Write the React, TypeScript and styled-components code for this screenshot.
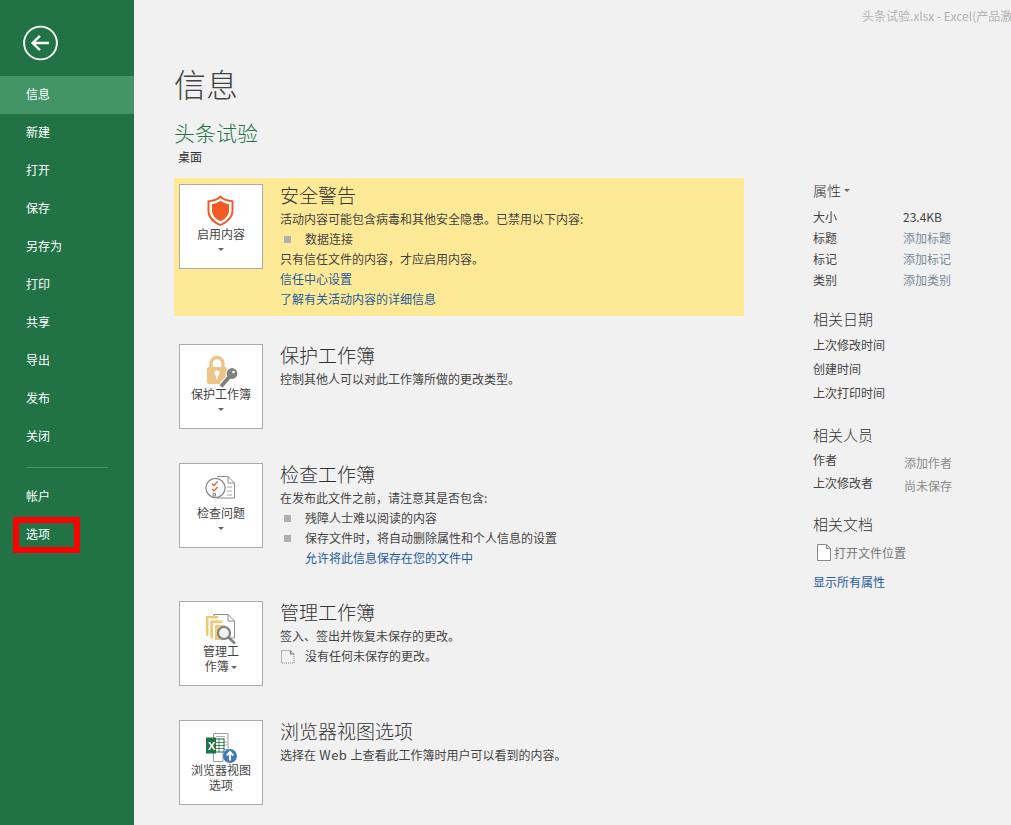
import React from "react";
import styled, { createGlobalStyle } from "styled-components";

const Global = createGlobalStyle`
  html, body { margin: 0; padding: 0; background: #f1f1f1; overflow: hidden; }
  body { font-family: "Noto Sans CJK SC", "Liberation Sans", sans-serif; }
  * { box-sizing: border-box; }
`;

const Page = styled.div`
  display: flex;
  width: 1011px;
  height: 825px;
  overflow: hidden;
  background: #f1f1f1;
  color: #444;
  font-size: 12px;
`;

const Sidebar = styled.nav`
  flex: 0 0 134px;
  background: #217346;
  color: #fff;
`;

const BackArea = styled.div`
  height: 76px;
  padding: 25px 0 0 23px;
  svg { display: block; }
`;

const NavItem = styled.div<{ $active?: boolean }>`
  position: relative;
  height: 38px;
  padding-left: 26px;
  line-height: 35px;
  font-size: 12px;
  background: ${(p) => (p.$active ? "#439467" : "transparent")};
`;

const NavDivider = styled.div`
  height: 1px;
  margin: 11px 26px 10px;
  width: 82px;
  background: #4b9069;
`;

const RedMark = styled.span`
  position: absolute;
  left: 13px;
  top: 1px;
  width: 67px;
  height: 36px;
  border: 6px solid #ff0000;
`;

const Main = styled.main`
  flex: 1;
  min-width: 0;
  padding-left: 40px;
`;

const WindowTitle = styled.div`
  height: 61px;
  padding: 8px 0 0 688px;
  line-height: 16px;
  font-size: 12px;
  color: #b4b4b4;
  white-space: nowrap;
  overflow: hidden;
`;

const PageTitle = styled.h1`
  margin: 0 0 12px;
  height: 44px;
  line-height: 44px;
  font-size: 32px;
  font-weight: 300;
  color: #444;
`;

const FileName = styled.div`
  height: 30px;
  line-height: 30px;
  font-size: 21px;
  font-weight: 300;
  color: #217346;
`;

const FilePath = styled.div`
  height: 18px;
  line-height: 20px;
  padding-left: 4px;
  margin-bottom: 13px;
  font-size: 12px;
  color: #333;
`;

const Columns = styled.div`
  display: flex;
  gap: 69px;
`;

const LeftColumn = styled.div`
  flex: 0 0 570px;
`;

const Section = styled.section<{ $warn?: boolean }>`
  display: flex;
  gap: 17px;
  padding: 6px 5px ${(p) => (p.$warn ? "0" : "28px")};
  height: ${(p) => (p.$warn ? "138px" : "auto")};
  margin-bottom: ${(p) => (p.$warn ? "22px" : "0")};
  background: ${(p) => (p.$warn ? "#fde996" : "transparent")};
`;

const ActionButton = styled.div`
  flex: 0 0 84px;
  height: 85px;
  padding-top: 7px;
  background: #fff;
  border: 1px solid #ababab;
  display: flex;
  flex-direction: column;
  align-items: center;
  svg { display: block; flex: none; overflow: visible; }
`;

const ActionLabel = styled.div`
  width: 80px;
  line-height: 15px;
  font-size: 12px;
  color: #444;
  text-align: center;
`;

const Caret = styled.span`
  display: inline-block;
  width: 0;
  height: 0;
  border-left: 3px solid transparent;
  border-right: 3px solid transparent;
  border-top: 3px solid #666;
  vertical-align: middle;
`;

const CaretRow = styled.div`
  height: 15px;
  line-height: 13px;
  text-align: center;
`;

const SectionBody = styled.div`
  flex: 1;
  min-width: 0;
  margin-bottom: -1px;
`;

const SectionTitle = styled.h2`
  margin: 0;
  height: 25px;
  line-height: 22px;
  font-size: 19px;
  font-weight: 300;
  color: #333;
`;

const Line = styled.div`
  height: 20px;
  line-height: 20px;
  font-size: 12px;
  color: #444;
  white-space: nowrap;
`;

const LinkLine = styled(Line)`
  color: #1f5c9e;
`;

const Bullet = styled(Line)`
  display: flex;
  align-items: center;
  gap: 14px;
  padding-left: 4px;
  &::before {
    content: "";
    flex: none;
    width: 7px;
    height: 7px;
    background: #b0b0b0;
  }
`;

const IndentLink = styled(LinkLine)`
  padding-left: 25px;
`;

const IconLine = styled(Line)`
  display: flex;
  align-items: center;
  gap: 9px;
  svg { flex: none; }
`;

const Latin = styled.span`
  font-size: 13px;
  letter-spacing: 0.4px;
`;

const RightColumn = styled.aside`
  flex: 0 0 198px;
`;

const PropHeading = styled.h3<{ $top?: number }>`
  margin: ${(p) => p.$top ?? 0}px 0 0;
  height: 26px;
  padding-bottom: 2px;
  font-size: 15px;
  font-weight: 300;
  color: #333;
  display: flex;
  align-items: center;
  gap: 3px;
`;

const SmallHeading = styled(PropHeading)`
  font-size: 14px;
  margin-bottom: 2px;
`;

const PropList = styled.div<{ $top?: number }>`
  margin-top: ${(p) => p.$top ?? 0}px;
`;

const PropRow = styled.div<{ $h: number }>`
  display: grid;
  grid-template-columns: 90px 1fr;
  height: ${(p) => p.$h}px;
  line-height: ${(p) => p.$h}px;
  font-size: 12px;
  color: #444;
`;

const PropValue = styled.span<{ $muted?: boolean; $nudge?: boolean }>`
  color: ${(p) => (p.$muted ? "#7a8a99" : "#444")};
  ${(p) => (p.$nudge ? "color:#8a8a8a; padding:3px 0 0 1px;" : "")}
`;

const FileLocation = styled.div`
  display: flex;
  align-items: center;
  gap: 3px;
  height: 26px;
  margin-top: 2px;
  padding-left: 4px;
  font-size: 12px;
  color: #777;
`;

const ShowAll = styled.div`
  margin-top: 7px;
  height: 20px;
  line-height: 20px;
  font-size: 12px;
  color: #1f5c9e;
`;

const BackIcon = () => (
  <svg width="36" height="36" viewBox="0 0 36 36" fill="none" stroke="#fff">
    <circle cx="17.5" cy="18" r="16.4" strokeWidth="1.9" />
    <path d="M26 18H10M17 10.8L9.6 18l7.4 7.2" strokeWidth="2.4" />
  </svg>
);

const ShieldIcon = () => (
  <svg width="40" height="34" viewBox="0 0 40 34">
    <path d="M19.5 3.500l3.500 2.600c2.500 1.400 5.500 2 9.500 2.400v10c0 7-5.500 12.500-13 15.500C12 31.500 6.500 26 6.500 18.500v-10c4-.4 7-1 9.500-2.400z" fill="#f25a26" />
    <path d="M19.500 6l2.500 1.800c2.200 1.200 4.700 1.900 8.500 2.300v8.400c0 5.900-4.500 10.500-11 13.400C13 29 8.500 24.400 8.500 18.500v-8.400c3.800-.4 6.300-1.100 8.500-2.300z" fill="#fff" />
    <path d="M19.500 8.800l1.500 1c2 1.200 4.300 1.900 7 2.300v6.400c0 4.600-3.300 8.300-8.500 10.700-5.200-2.400-8.500-6.100-8.500-10.700v-6.400c2.700-.4 5-1.100 7-2.300z" fill="#f25a26" />
  </svg>
);

const LockIcon = () => (
  <svg width="40" height="34" viewBox="0 0 40 34">
    <path d="M10 16V11.500a6 6 0 0 1 12 0V16" fill="none" stroke="#ecc586" strokeWidth="3.400" />
    <rect x="6" y="15" width="20" height="17" rx="2" fill="#ecc586" />
    <circle cx="16" cy="21" r="2.600" fill="#fff" />
    <rect x="15" y="21" width="2" height="6" fill="#fff" />
    <path d="M20 34.500L30 23" stroke="#fff" strokeWidth="6" />
    <circle cx="31" cy="21.500" r="6.400" fill="#fff" />
    <path d="M20 34.500L30 23" stroke="#7f7f7f" strokeWidth="3.800" />
    <circle cx="31" cy="21.500" r="5.400" fill="#7f7f7f" />
    <circle cx="32.500" cy="20" r="1.300" fill="#fff" />
  </svg>
);

const InspectIcon = () => (
  <svg width="40" height="34" viewBox="0 0 40 34" fill="none">
    <path d="M16 5.500h11l6.500 6.500v15H16" stroke="#8c8c8c" fill="#fff" />
    <path d="M27 5.500V12h6.500" stroke="#8c8c8c" />
    <path d="M26 16h5M26 20h5M26 24h5" stroke="#a6a6a6" />
    <circle cx="14.500" cy="17" r="9.600" stroke="#8c8c8c" strokeWidth="1.300" fill="#fff" />
    <path d="M11 12.500l2 2 3.500-4M11 18l2 2 3.500-4" stroke="#e4603c" strokeWidth="1.300" />
    <rect x="12" y="22.500" width="2.500" height="2.500" stroke="#8c8c8c" />
  </svg>
);

const ManageIcon = () => (
  <svg width="40" height="34" viewBox="0 0 40 34" fill="none">
    <path d="M13 5.500h14l6.500 6.500v17H13z" stroke="#8c8c8c" fill="#fff" />
    <path d="M27 5.500V12h6.500" stroke="#8c8c8c" />
    <rect x="5" y="7" width="12" height="20" fill="#f0c978" />
    <rect x="7.500" y="9.500" width="11" height="2" fill="#fff" />
    <rect x="7.500" y="9.500" width="2" height="17.500" fill="#fff" />
    <rect x="9.500" y="11.500" width="12" height="18" fill="#f0c978" />
    <rect x="12" y="14" width="12" height="2" fill="#fff" />
    <rect x="12" y="14" width="2" height="15.500" fill="#fff" />
    <rect x="14" y="16" width="10" height="15" fill="#f0c978" />
    <circle cx="23" cy="24" r="6" stroke="#7f7f7f" strokeWidth="2.200" fill="#f1f1f1" />
    <path d="M27.500 28.500L34 34.500" stroke="#7f7f7f" strokeWidth="2.600" />
  </svg>
);

const BrowserIcon = () => (
  <svg width="40" height="34" viewBox="0 0 40 34" fill="none">
    <path d="M12.500 5.500h14.500v16h-5v12h-9.500z" stroke="#9a9a9a" fill="#fff" />
    <path d="M15 8.500h9M15 11h9M23 14h3M23 17h3" stroke="#b0b0b0" />
    <rect x="14" y="11" width="9" height="13" fill="#fff" stroke="#217346" />
    <path d="M14 14.500h9M14 17.500h9M14 20.500h9M18 11v13" stroke="#217346" strokeWidth=".8" />
    <rect x="5" y="9.500" width="10" height="16" fill="#217346" />
    <text x="7" y="21.500" fontFamily="Liberation Sans, sans-serif" fontWeight="700" fontSize="11" fill="#fff">X</text>
    <circle cx="29" cy="28" r="7" fill="#3f7cb6" />
    <path d="M29 32.500v-8M25.800 27.500L29 24l3.200 3.500" stroke="#fff" strokeWidth="2" />
  </svg>
);

const DraftIcon = () => (
  <svg width="16" height="15" viewBox="0 0 16 15" fill="none" stroke="#777">
    <path d="M1.500 1.500h9l3.500 3.500v9H1.500z" strokeDasharray="1 1" />
    <path d="M10.500 1.500V5H14" />
  </svg>
);

const DocIcon = () => (
  <svg width="14" height="17" viewBox="0 0 14 17" fill="none">
    <path d="M.5.500h9l4 4v12H.5z" fill="#fff" stroke="#8a8a8a" />
    <path d="M9.500.500v4h4" stroke="#8a8a8a" />
  </svg>
);

const navTop = ["信息", "新建", "打开", "保存", "另存为", "打印", "共享", "导出", "发布", "关闭"];

export default function App() {
  return (
    <Page>
      <Global />
      <Sidebar>
        <BackArea>
          <BackIcon />
        </BackArea>
        {navTop.map((item, i) => (
          <NavItem key={item} $active={i === 0}>
            {item}
          </NavItem>
        ))}
        <NavDivider />
        <NavItem>帐户</NavItem>
        <NavItem>
          选项
          <RedMark />
        </NavItem>
      </Sidebar>
      <Main>
        <WindowTitle>头条试验.xlsx - Excel(产品激活失败)</WindowTitle>
        <PageTitle>信息</PageTitle>
        <FileName>头条试验</FileName>
        <FilePath>桌面</FilePath>
        <Columns>
          <LeftColumn>
            <Section $warn>
              <ActionButton>
                <ShieldIcon />
                <ActionLabel>启用内容</ActionLabel>
                <CaretRow>
                  <Caret />
                </CaretRow>
              </ActionButton>
              <SectionBody>
                <SectionTitle>安全警告</SectionTitle>
                <Line>活动内容可能包含病毒和其他安全隐患。已禁用以下内容:</Line>
                <Bullet>数据连接</Bullet>
                <Line>只有信任文件的内容，才应启用内容。</Line>
                <LinkLine>信任中心设置</LinkLine>
                <LinkLine>了解有关活动内容的详细信息</LinkLine>
              </SectionBody>
            </Section>
            <Section>
              <ActionButton>
                <LockIcon />
                <ActionLabel>保护工作簿</ActionLabel>
                <CaretRow>
                  <Caret />
                </CaretRow>
              </ActionButton>
              <SectionBody>
                <SectionTitle>保护工作簿</SectionTitle>
                <Line>控制其他人可以对此工作簿所做的更改类型。</Line>
              </SectionBody>
            </Section>
            <Section>
              <ActionButton>
                <InspectIcon />
                <ActionLabel>检查问题</ActionLabel>
                <CaretRow>
                  <Caret />
                </CaretRow>
              </ActionButton>
              <SectionBody>
                <SectionTitle>检查工作簿</SectionTitle>
                <Line>在发布此文件之前，请注意其是否包含:</Line>
                <Bullet>残障人士难以阅读的内容</Bullet>
                <Bullet>保存文件时，将自动删除属性和个人信息的设置</Bullet>
                <IndentLink>允许将此信息保存在您的文件中</IndentLink>
              </SectionBody>
            </Section>
            <Section>
              <ActionButton>
                <ManageIcon />
                <ActionLabel>
                  管理工
                  <br />
                  作簿 <Caret />
                </ActionLabel>
              </ActionButton>
              <SectionBody>
                <SectionTitle>管理工作簿</SectionTitle>
                <Line>签入、签出并恢复未保存的更改。</Line>
                <IconLine>
                  <DraftIcon />
                  没有任何未保存的更改。
                </IconLine>
              </SectionBody>
            </Section>
            <Section>
              <ActionButton>
                <BrowserIcon />
                <ActionLabel>
                  浏览器视图
                  <br />
                  选项
                </ActionLabel>
              </ActionButton>
              <SectionBody>
                <SectionTitle>浏览器视图选项</SectionTitle>
                <Line>
                  选择在<Latin> Web </Latin>上查看此工作簿时用户可以看到的内容。
                </Line>
              </SectionBody>
            </Section>
          </LeftColumn>
          <RightColumn>
            <SmallHeading>
              属性 <Caret />
            </SmallHeading>
            <PropRow $h={21}>
              <span>大小</span>
              <PropValue>23.4KB</PropValue>
            </PropRow>
            <PropRow $h={21}>
              <span>标题</span>
              <PropValue $muted>添加标题</PropValue>
            </PropRow>
            <PropRow $h={21}>
              <span>标记</span>
              <PropValue $muted>添加标记</PropValue>
            </PropRow>
            <PropRow $h={21}>
              <span>类别</span>
              <PropValue $muted>添加类别</PropValue>
            </PropRow>
            <PropHeading $top={16}>相关日期</PropHeading>
            <PropList $top={1}>
              <PropRow $h={24}>
                <span>上次修改时间</span>
              </PropRow>
              <PropRow $h={24}>
                <span>创建时间</span>
              </PropRow>
              <PropRow $h={24}>
                <span>上次打印时间</span>
              </PropRow>
            </PropList>
            <PropHeading $top={17}>相关人员</PropHeading>
            <PropList>
              <PropRow $h={23}>
                <span>作者</span>
                <PropValue $nudge>添加作者</PropValue>
              </PropRow>
              <PropRow $h={23}>
                <span>上次修改者</span>
                <PropValue $nudge>尚未保存</PropValue>
              </PropRow>
            </PropList>
            <PropHeading $top={17}>相关文档</PropHeading>
            <FileLocation>
              <DocIcon />
              打开文件位置
            </FileLocation>
            <ShowAll>显示所有属性</ShowAll>
          </RightColumn>
        </Columns>
      </Main>
    </Page>
  );
}
